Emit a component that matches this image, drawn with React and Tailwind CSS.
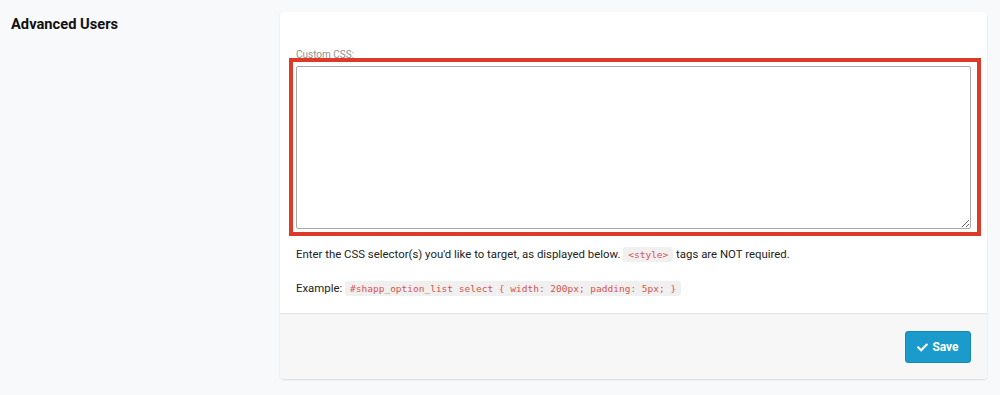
import { FaCheck } from 'react-icons/fa'

const codeCls = 'rounded-[3px] bg-[#f0f0f0] px-[5px] py-[2px] font-["DejaVu_Sans_Mono",monospace] text-[9.5px] text-[#d9534f]'

export default function App() {
  return (
    <div className="min-h-[395px] bg-[#f8f9fb] font-['Roboto',sans-serif] flex px-[11px] pt-[12px]">
      <div className="w-[269px] shrink-0">
        <h2 className="mt-[2px] text-[14.7px] font-bold text-[#111] leading-[20px]">Advanced Users</h2>
      </div>

      <div className="w-[707px] h-[367px] rounded-[4px] bg-white shadow-[0_1px_2px_rgba(0,0,0,0.12)] overflow-hidden flex flex-col">
        <div className="flex-1 px-4 pt-[36px]">
          <label className="block text-[10px] leading-[13px] text-[#8f8f8f] mb-[5px]">Custom CSS:</label>
          <div className="relative">
            <textarea className="block w-[675px] h-[163px] rounded-[2px] border border-[#aaa] bg-white resize-y outline-none" />
            <div className="pointer-events-none absolute -left-[7px] -right-[10px] -top-[8px] -bottom-[7px] border-4 border-[#dd3b2a]" />
          </div>

          <p className="mt-[17px] text-[11.4px] leading-[16px] text-[#222]">
            Enter the CSS selector(s) you'd like to target, as displayed below.{' '}
            <code className={codeCls}>&lt;style&gt;</code> tags are NOT required.
          </p>
          <p className="mt-[17px] text-[11.4px] leading-[16px] text-[#222]">
            Example:{' '}
            <code className={codeCls}>#shapp_option_list select {'{'} width: 200px; padding: 5px; {'}'}</code>
          </p>
        </div>

        <div className="border-t border-[#e3e3e3] bg-[#f7f7f7] h-[66px] shrink-0 flex items-center justify-end pr-[16px] pt-[1px]">
          <button className="flex items-center gap-[4px] h-[32px] w-[66px] justify-center rounded-[3px] border border-[#1689b5] bg-[#1a9bcb] text-white text-[12px] font-bold">
            <FaCheck size={11} />
            Save
          </button>
        </div>
      </div>
    </div>
  )
}
